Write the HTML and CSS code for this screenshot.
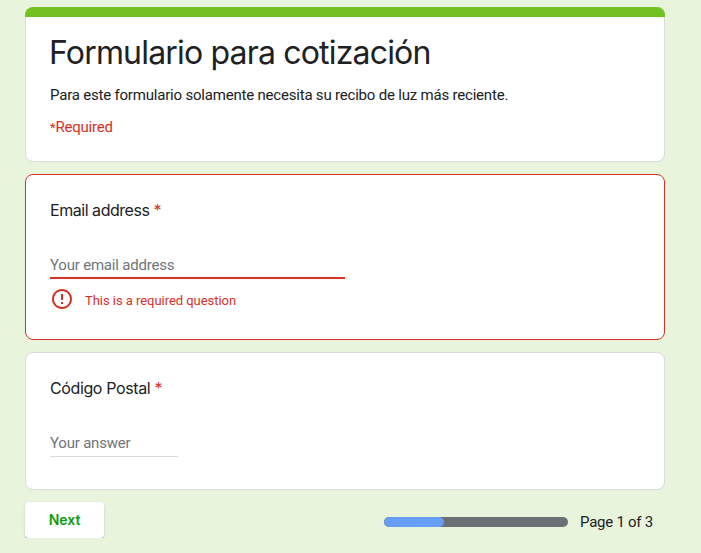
FILE: index.html
```html
<!DOCTYPE html>
<html lang="es">
<head>
<meta charset="utf-8">
<title>Formulario para cotización</title>
<link rel="stylesheet" href="styles.css">
</head>
<body>
<form class="form">
  <header class="card header">
    <h1 class="title">Formulario para cotización</h1>
    <p class="description">Para este formulario solamente necesita su recibo de luz más reciente.</p>
    <p class="required-note"><span class="note-star">*</span>Required</p>
  </header>
  <section class="card question invalid">
    <h2 class="label">Email address <span class="star">*</span></h2>
    <div class="field field-email">Your email address</div>
    <div class="error">
      <svg class="error-icon" viewBox="0 0 24 24" width="24" height="24"><path fill="currentColor" d="M11 15h2v2h-2zm0-8h2v6h-2zm.99-5C6.47 2 2 6.48 2 12s4.470 10 9.990 10C17.520 22 22 17.520 22 12S17.520 2 11.990 2zM12 20c-4.420 0-8-3.580-8-8s3.580-8 8-8 8 3.580 8 8-3.580 8-8 8z"/></svg>
      <span class="error-text">This is a required question</span>
    </div>
  </section>
  <section class="card question">
    <h2 class="label label-postal">Código Postal <span class="star">*</span></h2>
    <div class="field field-short">Your answer</div>
  </section>
  <footer class="footer">
    <button class="next" type="button">Next</button>
    <div class="progress"><div class="progress-fill"></div></div>
    <span class="page">Page 1 of 3</span>
  </footer>
</form>
</body>
</html>
```
FILE: styles.css
```css
* { box-sizing: border-box; }
body {
  margin: 0;
  background: #e8f4dc;
  color: #202124;
  font-family: Roboto, "Liberation Sans", sans-serif;
  font-size: 15px;
  letter-spacing: -0.2px;
  overflow: hidden;
}
h1, h2, p { margin: 0; font-weight: 400; white-space: nowrap; }
.form {
  width: 640px;
  margin: 7px 0 0 25px;
  display: flex;
  flex-direction: column;
  gap: 12px;
}
.card {
  background: #fff;
  border: 1px solid #dadce0;
  border-radius: 8px;
  padding: 0 24px;
}
.header {
  position: relative;
  height: 155px;
  padding-top: 25px;
}
.header::before {
  content: "";
  position: absolute;
  top: -1px;
  left: -1px;
  right: -1px;
  height: 10px;
  border-radius: 8px 8px 0 0;
  background: #72c11f;
}
.title {
  font: 400 32px/40px Inter, sans-serif;
  letter-spacing: -0.82px;
  margin-left: -1px;
}
.description { margin-top: 11px; line-height: 22px; }
.required-note { margin-top: 10px; line-height: 22px; color: #d93025; }
.note-star { font-size: 13px; }
.question { height: 138px; padding-top: 23px; }
.invalid { height: 166px; border-color: #d93025; }
.label {
  font: 400 16px/24px Inter, sans-serif;
  letter-spacing: -0.46px;
}
.label-postal { letter-spacing: -0.38px; }
.star { color: #d93025; }
.field {
  margin-top: 31px;
  height: 26px;
  line-height: 24px;
  color: #70757a;
  border-bottom: 1px solid #dadce0;
}
.field-email { width: 295px; border-bottom: 2px solid #d93025; }
.field-short { width: 128px; }
.error {
  display: flex;
  align-items: center;
  gap: 11px;
  margin-top: 8px;
  color: #d93025;
  font-size: 13px;
  letter-spacing: -0.04px;
}
.error-text { padding-top: 2px; }
.footer { display: flex; align-items: center; height: 36px; }
.next {
  width: 79px;
  height: 36px;
  padding: 0;
  border: 0;
  border-radius: 4px;
  background: #fff;
  color: #0b9c0b;
  font: 600 14px/36px Inter, sans-serif;
  box-shadow: 0 2px 1px -1px rgba(0,0,0,.25), 0 1px 1px rgba(0,0,0,.14), 0 1px 3px rgba(0,0,0,.12);
}
.progress {
  width: 184px;
  height: 10px;
  margin: 4px 12px 0 280px;
  border-radius: 5px;
  background: #6b7074;
  overflow: hidden;
}
.progress-fill { width: 60px; height: 10px; border-radius: 5px; background: #669df6; }
.page { margin-top: 4px; letter-spacing: -0.25px; white-space: nowrap; }
```
